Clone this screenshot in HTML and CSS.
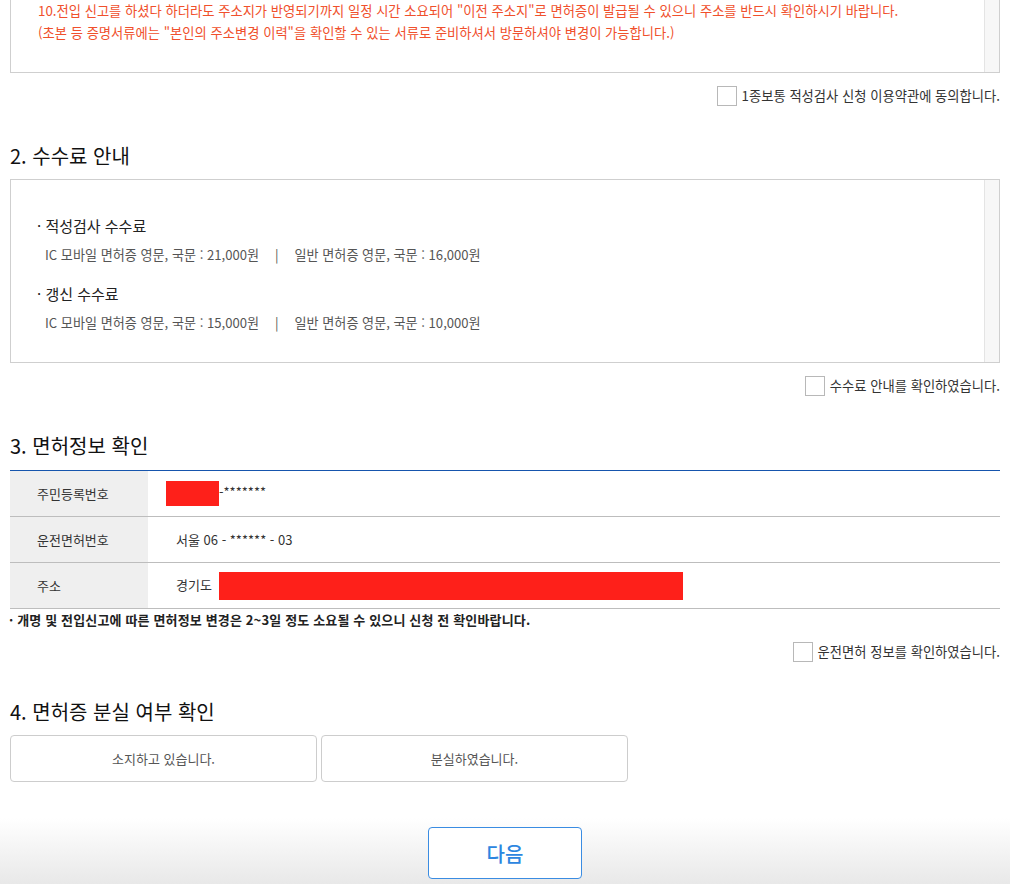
FILE: index.html
```html
<!DOCTYPE html>
<html lang="ko">
<head>
    <meta charset="UTF-8">
    <meta name="viewport" content="width=device-width, initial-scale=1.0">
    <title>적성검사 신청</title>
    <link rel="stylesheet" href="styles.css">
</head>
<body>
    <div class="wrap">
        <div class="box terms">
            <div class="box-body">
                <p>10.전입 신고를 하셨다 하더라도 주소지가 반영되기까지 일정 시간 소요되어 "이전 주소지"로 면허증이 발급될 수 있으니 주소를 반드시 확인하시기 바랍니다.</p>
                <p>(초본 등 증명서류에는 "본인의 주소변경 이력"을 확인할 수 있는 서류로 준비하셔서 방문하셔야 변경이 가능합니다.)</p>
            </div>
            <div class="track"></div>
        </div>
        <label class="agree"><span class="chk"></span>1종보통 적성검사 신청 이용약관에 동의합니다.</label>

        <h2>2. 수수료 안내</h2>
        <div class="box fee">
            <div class="box-body">
                <dl>
                    <dt>· 적성검사 수수료</dt>
                    <dd>IC 모바일 면허증 영문, 국문 : 21,000원<span class="sep">|</span>일반 면허증 영문, 국문 : 16,000원</dd>
                    <dt>· 갱신 수수료</dt>
                    <dd>IC 모바일 면허증 영문, 국문 : 15,000원<span class="sep">|</span>일반 면허증 영문, 국문 : 10,000원</dd>
                </dl>
            </div>
            <div class="track"></div>
        </div>
        <label class="agree"><span class="chk"></span>수수료 안내를 확인하였습니다.</label>

        <h2>3. 면허정보 확인</h2>
        <table class="info">
            <tr>
                <th>주민등록번호</th>
                <td><span class="mask mask-id"></span>-*******</td>
            </tr>
            <tr>
                <th>운전면허번호</th>
                <td>서울 06 - ****** - 03</td>
            </tr>
            <tr>
                <th>주소</th>
                <td>경기도 <span class="mask mask-addr"></span></td>
            </tr>
        </table>
        <p class="note">· 개명 및 전입신고에 따른 면허정보 변경은 2~3일 정도 소요될 수 있으니 신청 전 확인바랍니다.</p>
        <label class="agree agree-tight"><span class="chk"></span>운전면허 정보를 확인하였습니다.</label>

        <h2>4. 면허증 분실 여부 확인</h2>
        <div class="choices">
            <button class="choice">소지하고 있습니다.</button>
            <button class="choice">분실하였습니다.</button>
        </div>
    </div>
    <div class="footer">
        <button class="next">다음</button>
    </div>
</body>
</html>
```

FILE: styles.css
```css
body {
    margin: 0;
    font-family: "Noto Sans CJK KR", "Noto Sans", sans-serif;
    color: #333;
    background-color: #fff;
    overflow: hidden;
}
.wrap {
    padding: 0 10px;
}
.box {
    display: flex;
    border: 1px solid #cfcfcf;
}
.box-body {
    flex: 1;
}
.track {
    width: 14px;
    background-color: #f7f7f7;
    border-left: 1px solid #e4e4e4;
}
.terms {
    margin-top: -12px;
}
.terms .box-body {
    padding: 11px 0 28px 27px;
}
.terms p {
    margin: 0;
    font-size: 13.3px;
    line-height: 22px;
    color: #f0502c;
}
.agree {
    display: flex;
    justify-content: flex-end;
    align-items: center;
    gap: 5px;
    margin-top: 13px;
    font-size: 13.3px;
    line-height: 20px;
    color: #333;
}
.agree-tight {
    margin-top: 12px;
}
.chk {
    width: 18px;
    height: 18px;
    border: 1px solid #b8b8b8;
    background-color: #fff;
}
h2 {
    margin: 36px 0 9px;
    font-size: 20px;
    font-weight: 400;
    line-height: 28px;
    color: #111;
}
.fee .box-body {
    padding: 35px 0 29px 26px;
}
dl {
    margin: 0;
}
dt {
    font-size: 15px;
    line-height: 22px;
    color: #222;
}
dt + dd + dt {
    margin-top: 18px;
}
dd {
    margin: 8px 0 0 8px;
    font-size: 13.1px;
    line-height: 20px;
    color: #555;
}
.sep {
    margin: 0 16px;
}
.info {
    width: 100%;
    margin-top: 10px;
    border-collapse: separate;
    border-spacing: 0;
    border-top: 1px solid #1655ad;
    font-size: 13px;
    color: #333;
}
.info th,
.info td {
    height: 45px;
    padding: 0;
    border-bottom: 1px solid #bdbdbd;
    text-align: left;
    font-weight: 400;
}
.info th {
    width: 111px;
    padding-left: 27px;
    background-color: #efefef;
}
.info td {
    padding-left: 28px;
}
.mask {
    display: inline-block;
    vertical-align: middle;
    background-color: #fe201a;
}
.mask-id {
    width: 53px;
    height: 25px;
    margin-left: -10px;
}
.mask-addr {
    width: 464px;
    height: 28px;
    margin-left: 3px;
}
.note {
    margin: 1px 0 0 -1px;
    font-size: 13px;
    font-weight: 700;
    letter-spacing: 0.15px;
    line-height: 20px;
    color: #222;
}
.choices {
    display: flex;
    gap: 4px;
}
.choice {
    width: 307px;
    height: 47px;
    border: 1px solid #cdcdcd;
    border-radius: 4px;
    background-color: #fff;
    font-family: inherit;
    font-size: 13px;
    color: #555;
}
.footer {
    display: flex;
    justify-content: center;
    padding: 45px 0 6px;
    background: linear-gradient(to bottom, #fff 35%, #e8e8e8 100%);
}
.next {
    width: 154px;
    height: 52px;
    border: 1px solid #3a8ce2;
    border-radius: 4px;
    background-color: #fff;
    font-family: inherit;
    font-size: 20px;
    font-weight: 500;
    color: #2c86e0;
}
```
